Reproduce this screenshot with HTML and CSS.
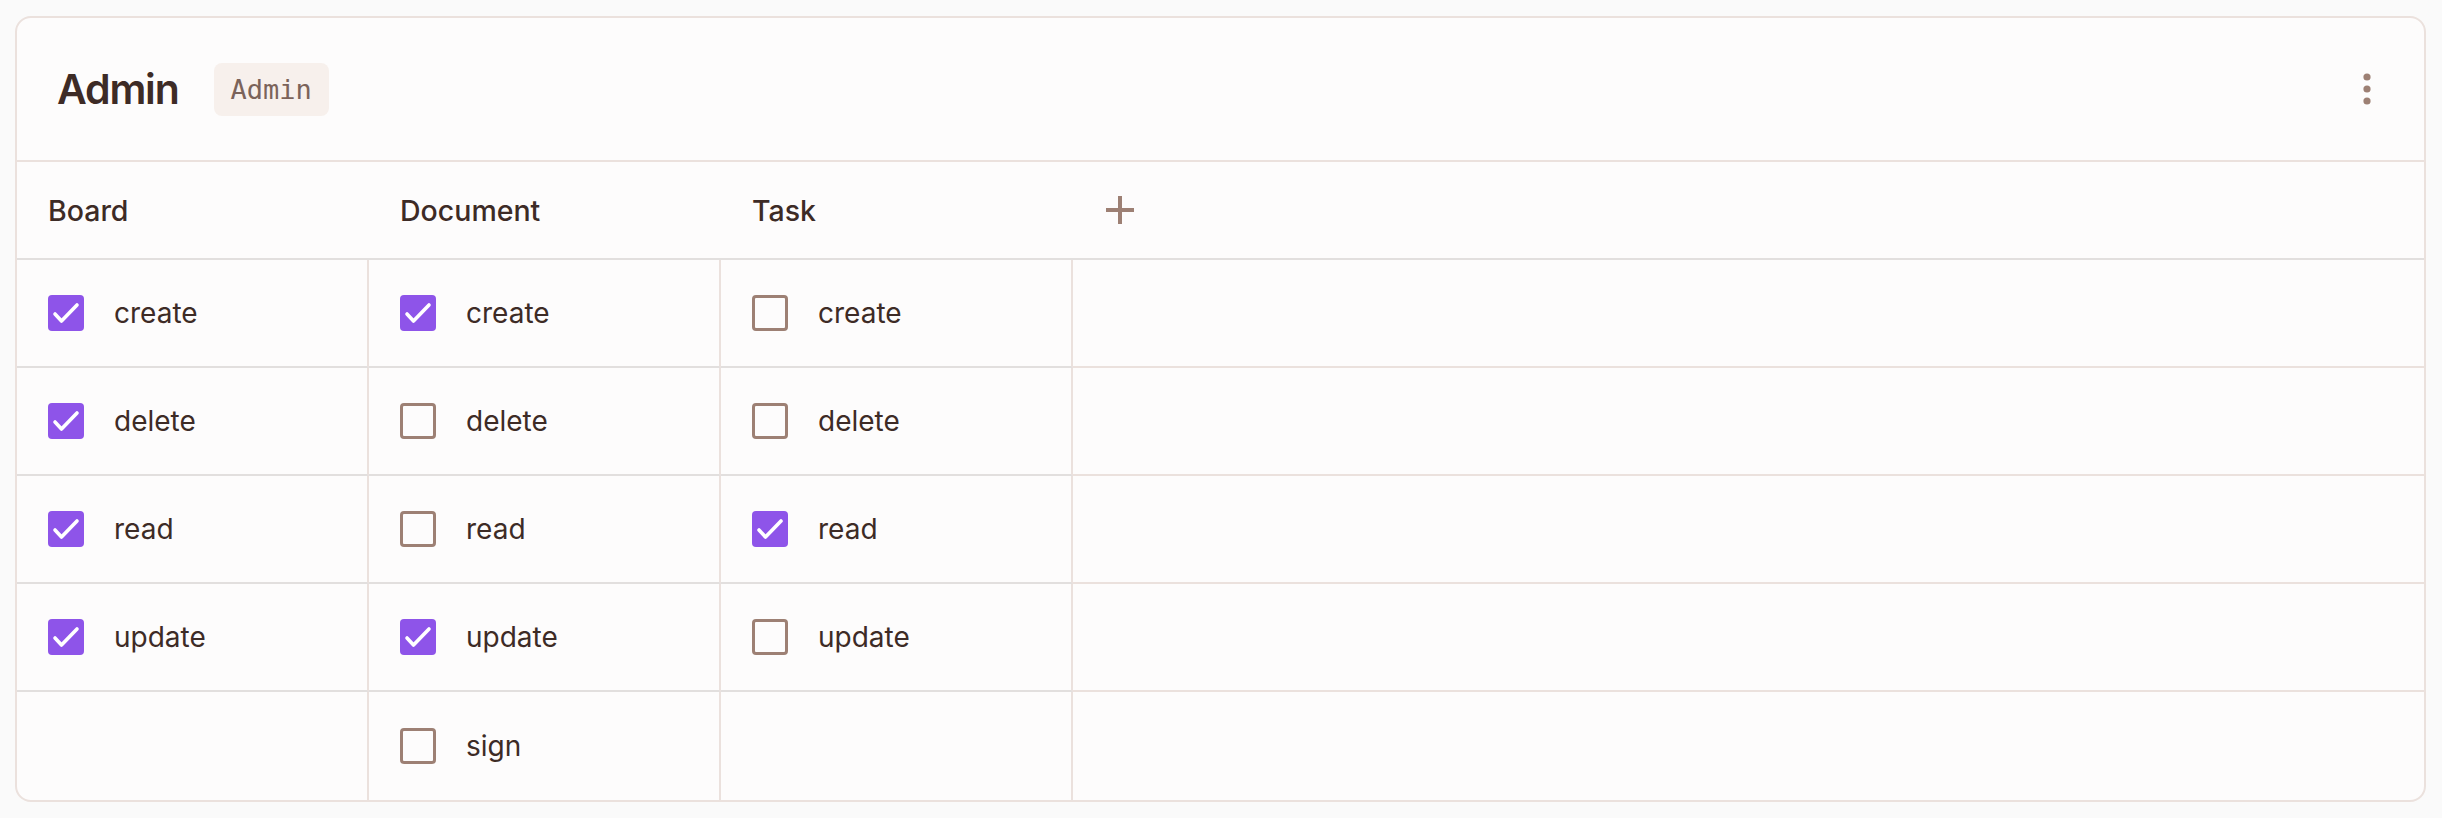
FILE: index.html
```html
<!DOCTYPE html>
<html lang="en">
<head>
  <meta charset="UTF-8" />
  <meta name="viewport" content="width=device-width, initial-scale=1" />
  <title>Role permissions</title>
  <link rel="stylesheet" href="styles.css">
</head>
<body>
  <div class="card">
    <div class="card-header">
      <h2 class="role-name">Admin</h2>
      <code class="role-key">Admin</code>
      <button class="more" aria-label="More">
        <svg width="8" height="32" viewBox="0 0 8 32">
          <circle cx="4" cy="4" r="3.6" />
          <circle cx="4" cy="16" r="3.6" />
          <circle cx="4" cy="28" r="3.6" />
        </svg>
      </button>
    </div>

    <div class="perm-grid">
      <div class="col-head">Board</div>
      <div class="col-head">Document</div>
      <div class="col-head">Task</div>
      <div class="col-head add">
        <svg width="28" height="28" viewBox="0 0 28 28">
          <path d="M14 0v28M0 14h28" />
        </svg>
      </div>

      <!-- row 1 -->
      <label class="cell"><span class="box on"></span>create</label>
      <label class="cell"><span class="box on"></span>create</label>
      <label class="cell"><span class="box"></span>create</label>
      <div class="cell filler"></div>

      <!-- row 2 -->
      <label class="cell"><span class="box on"></span>delete</label>
      <label class="cell"><span class="box"></span>delete</label>
      <label class="cell"><span class="box"></span>delete</label>
      <div class="cell filler"></div>

      <!-- row 3 -->
      <label class="cell"><span class="box on"></span>read</label>
      <label class="cell"><span class="box"></span>read</label>
      <label class="cell"><span class="box on"></span>read</label>
      <div class="cell filler"></div>

      <!-- row 4 -->
      <label class="cell"><span class="box on"></span>update</label>
      <label class="cell"><span class="box on"></span>update</label>
      <label class="cell"><span class="box"></span>update</label>
      <div class="cell filler"></div>

      <!-- row 5 -->
      <div class="cell last"></div>
      <label class="cell last"><span class="box"></span>sign</label>
      <div class="cell last"></div>
      <div class="cell filler last"></div>
    </div>
  </div>
</body>
</html>
```

FILE: styles.css
```css
:root {
  --page-bg: #fafafa;
  --card-bg: #fdfcfc;
  --text-color: #3d2b26;
  --muted: #9d8074;
  --badge-bg: #f7f0ec;
  --badge-text: #7b635a;
  --line-pink: #ebe1dd;
  --line-grey: #e2dfde;
  --purple: #8e54e9;
}

body {
  background: var(--page-bg);
  color: var(--text-color);
  font-family: Inter, "Noto Sans", sans-serif;
  margin: 0;
  padding: 16px 16px 18px 15px;
}

.card {
  background: var(--card-bg);
  border: 2px solid var(--line-pink);
  border-radius: 16px;
  overflow: hidden;
}

.card-header {
  display: flex;
  align-items: center;
  height: 142px;
  padding: 0 40px;
  border-bottom: 2px solid var(--line-pink);
}
.role-name {
  margin: 0;
  font-size: 41px;
  font-weight: 600;
  letter-spacing: -1.2px;
}
.role-key {
  margin-left: 35px;
  height: 53px;
  padding: 0 17px;
  display: inline-flex;
  align-items: center;
  background: var(--badge-bg);
  color: var(--badge-text);
  border-radius: 8px;
  font-family: "DejaVu Sans Mono", "Liberation Mono", monospace;
  font-size: 27px;
}
.more {
  margin-left: auto;
  margin-right: 13px;
  background: none;
  border: none;
  padding: 0;
  cursor: pointer;
  display: flex;
}
.more svg {
  fill: var(--muted);
}

.perm-grid {
  display: grid;
  grid-template-columns: 352px 352px 352px 1fr;
}
.col-head {
  height: 96px;
  display: flex;
  align-items: center;
  padding-left: 31px;
  font-size: 28.5px;
  font-weight: 500;
  border-bottom: 2px solid var(--line-grey);
}
.col-head.add {
  padding-left: 33px;
}
.col-head.add svg {
  stroke: var(--muted);
  stroke-width: 4;
}

.cell {
  height: 106px;
  display: flex;
  align-items: center;
  gap: 30px;
  padding-left: 31px;
  font-size: 28px;
  border-right: 2px solid var(--line-pink);
  border-bottom: 2px solid var(--line-grey);
  cursor: pointer;
}
.cell.filler {
  border-right: none;
  border-bottom-color: var(--line-pink);
  cursor: default;
}
.cell.last {
  border-bottom: none;
  height: 108px;
}

.box {
  width: 36px;
  height: 36px;
  box-sizing: border-box;
  border: 3px solid var(--muted);
  border-radius: 4px;
  flex-shrink: 0;
}
.box.on {
  border: none;
  background: var(--purple) url("data:image/svg+xml,%3Csvg xmlns='http://www.w3.org/2000/svg' viewBox='0 0 36 36'%3E%3Cpath d='M7 19l6.5 7L29 10' fill='none' stroke='white' stroke-width='3.6' stroke-linecap='round' stroke-linejoin='round'/%3E%3C/svg%3E") center / 36px 36px no-repeat;
}
```
